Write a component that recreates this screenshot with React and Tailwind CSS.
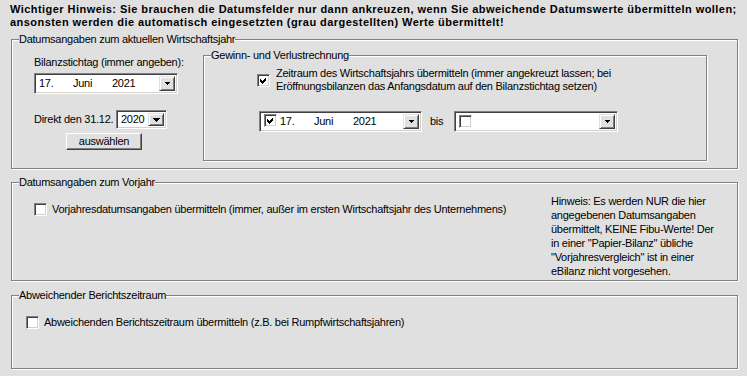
import React from "react";

const Check = ({ checked }) => (
  <span className="inline-flex h-[13px] w-[13px] shrink-0 items-center justify-center border border-t-[#808080] border-l-[#808080] border-b-white border-r-white bg-white shadow-[inset_1px_1px_0_#404040,inset_-1px_-1px_0_#d4d0c8]">
    {checked && (
      <svg width="11" height="11" viewBox="0 0 11 11" shapeRendering="crispEdges">
        <polygon points="2,4 4,6 8,2 8,5 4,9 2,7" fill="#000" />
      </svg>
    )}
  </span>
);

const DropButton = ({ big }) => (
  <span className="flex h-full w-[16px] shrink-0 items-center justify-center border border-t-[#e0e0e0] border-l-[#e0e0e0] border-b-[#404040] border-r-[#404040] bg-[#e0e0e0] shadow-[inset_1px_1px_0_#fff,inset_-1px_-1px_0_#808080]">
    <svg width={big ? 7 : 5} height={big ? 4 : 3} viewBox={big ? "0 0 7 4" : "0 0 5 3"} shapeRendering="crispEdges">
      <polygon points={big ? "0,0 7,0 3.5,4" : "0,0 5,0 2.5,3"} fill="#000" />
    </svg>
  </span>
);

const Combo = ({ className, children, big }) => (
  <div className={`flex shrink-0 items-stretch bg-white border border-t-[#808080] border-l-[#808080] border-b-white border-r-white shadow-[inset_1px_1px_0_#404040,inset_-1px_-1px_0_#d4d0c8] p-[2px] ${className}`}>
    <div className="flex flex-1 items-center pl-[2px] leading-[13px]">{children}</div>
    <DropButton big={big} />
  </div>
);

const DateText = () => (
  <>
    <span className="w-[34px]">17.</span>
    <span className="w-[39px]">Juni</span>
    <span>2021</span>
  </>
);

const Group = ({ label, className, children }) => (
  <div className={`relative border border-[#808080] shadow-[inset_1px_1px_0_#fff,1px_1px_0_#fff] ${className}`}>
    <span className="absolute left-[7px] top-[-7px] bg-[#e0e0e0] leading-[13px] whitespace-nowrap">
      {label}
    </span>
    {children}
  </div>
);

export default function App() {
  return (
    <div className="h-[376px] w-[747px] overflow-hidden bg-[#e0e0e0] pl-[10px] pt-[3px] font-['Liberation_Sans',Arial,sans-serif] text-[11px] leading-[13px] tracking-[-0.26px] text-black">
      <p className="font-bold tracking-[0.45px] whitespace-nowrap">
        Wichtiger Hinweis: Sie brauchen die Datumsfelder nur dann ankreuzen, wenn Sie abweichende Datumswerte übermitteln wollen;
        <br />
        ansonsten werden die automatisch eingesetzten (grau dargestellten) Werte übermittelt!
      </p>

      <Group
        label="Datumsangaben zum aktuellen Wirtschaftsjahr"
        className="ml-[1px] mt-[10px] flex h-[130px] w-[727px] pl-[22px] pt-[15px]"
      >
        <div className="flex w-[145px] flex-col">
          <span className="mt-[1px] whitespace-nowrap">Bilanzstichtag (immer angeben):</span>
          <Combo className="mt-[4px] h-[21px] w-[144px]">
            <DateText />
          </Combo>
          <div className="mt-[16px] flex items-center">
            <span className="w-[82px] whitespace-nowrap">Direkt den 31.12.</span>
            <Combo className="h-[19px] w-[51px]" big>
              2020
            </Combo>
          </div>
          <button className="ml-[32px] mt-[4px] h-[17px] w-[76px] border border-t-white border-l-white border-b-[#404040] border-r-[#404040] bg-[#e0e0e0] leading-[13px] shadow-[inset_-1px_-1px_0_#808080]">
            auswählen
          </button>
        </div>

        <Group
          label="Gewinn- und Verlustrechnung"
          className="ml-[24px] h-[106px] w-[504px] pl-[53px] pt-[11px]"
        >
          <div className="flex items-center gap-[6px]">
            <Check checked />
            <span className="whitespace-nowrap">
              Zeitraum des Wirtschaftsjahrs übermitteln (immer angekreuzt lassen; bei
              <br />
              Eröffnungsbilanzen das Anfangsdatum auf den Bilanzstichtag setzen)
            </span>
          </div>
          <div className="ml-[2px] mt-[18px] flex items-center">
            <Combo className="h-[21px] w-[163px]">
              <span className="mr-[3px]">
                <Check checked />
              </span>
              <DateText />
            </Combo>
            <span className="ml-[8px] w-[24px]">bis</span>
            <Combo className="h-[21px] w-[164px]">
              <Check />
            </Combo>
          </div>
        </Group>
      </Group>

      <Group
        label="Datumsangaben zum Vorjahr"
        className="ml-[1px] mt-[13px] flex h-[99px] w-[727px] pl-[22px] pt-[11px]"
      >
        <div className="w-[517px]">
          <div className="mt-[9px] flex items-center gap-[5px]">
            <Check />
            <span className="whitespace-nowrap">
              Vorjahresdatumsangaben übermitteln (immer, außer im ersten Wirtschaftsjahr des Unternehmens)
            </span>
          </div>
        </div>
        <p className="leading-[14px] whitespace-nowrap">
          Hinweis: Es werden NUR die hier
          <br />
          angegebenen Datumsangaben
          <br />
          übermittelt, KEINE Fibu-Werte! Der
          <br />
          in einer "Papier-Bilanz" übliche
          <br />
          "Vorjahresvergleich" ist in einer
          <br />
          eBilanz nicht vorgesehen.
        </p>
      </Group>

      <Group
        label="Abweichender Berichtszeitraum"
        className="ml-[1px] mt-[14px] h-[74px] w-[727px] pl-[14px] pt-[20px]"
      >
        <div className="flex items-center gap-[5px]">
          <Check />
          <span className="whitespace-nowrap">
            Abweichenden Berichtszeitraum übermitteln (z.B. bei Rumpfwirtschaftsjahren)
          </span>
        </div>
      </Group>
    </div>
  );
}
